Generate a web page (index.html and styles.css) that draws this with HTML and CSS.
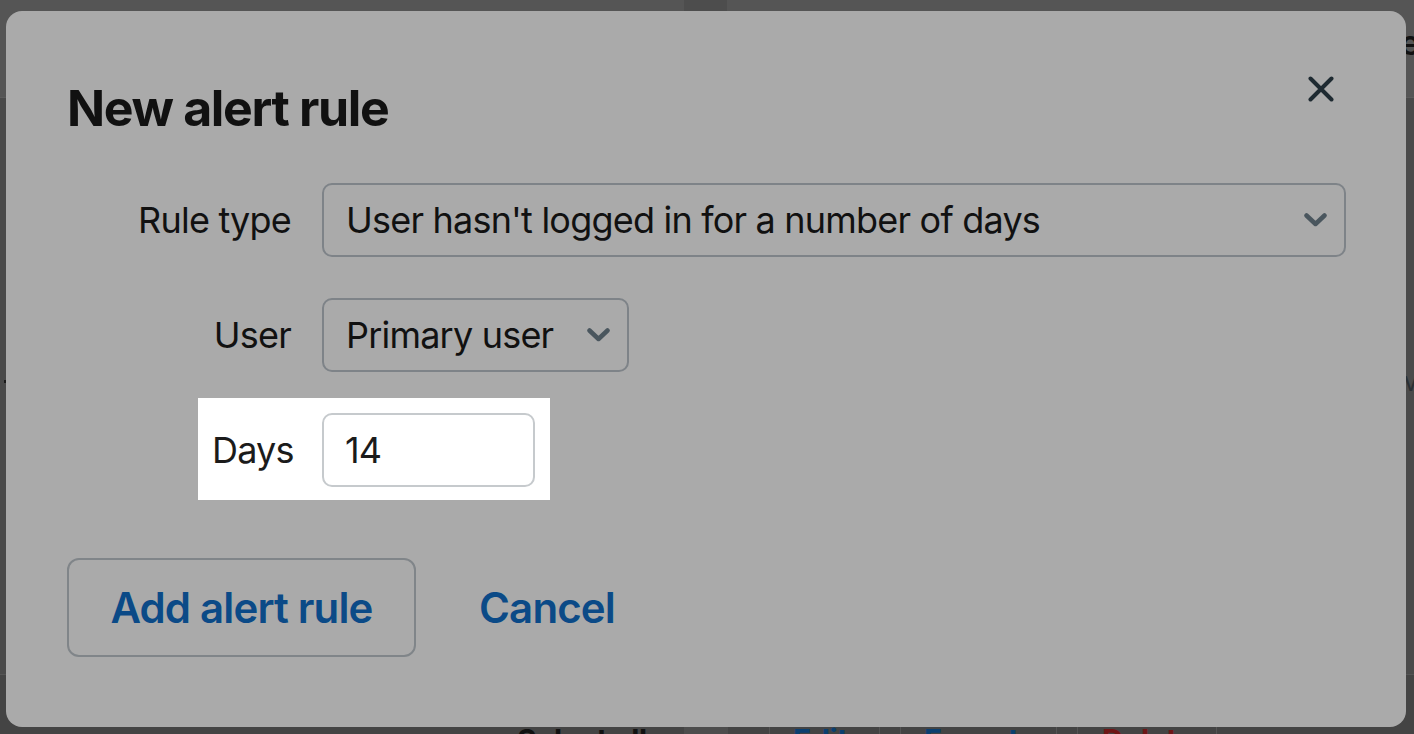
FILE: index.html
```html
<!DOCTYPE html>
<html lang="en">
<head>
<meta charset="utf-8">
<title>New alert rule</title>
<link rel="stylesheet" href="styles.css">
</head>
<body>
<div class="app">
  <header class="app-header">
    <span class="hdr-tab"></span>
    <span class="hdr-title">Save</span>
  </header>
  <main class="app-main">
    <div class="app-row"><span class="app-dot"></span><span class="app-peek">v</span></div>
  </main>
  <footer class="app-foot">
    <span class="tb-text tb-select">Select all</span>
    <span class="tb-box"></span>
    <span class="tb-btn tb-edit"><span class="tb-text tb-link">Edit</span></span>
    <span class="tb-btn tb-export"><span class="tb-text tb-link">Export</span></span>
    <span class="tb-btn tb-delete"><span class="tb-text tb-danger">Delete</span></span>
  </footer>
</div>

<div class="modal" role="dialog" aria-labelledby="modal-title">
  <div class="modal-head">
    <h1 id="modal-title" class="modal-title">New alert rule</h1>
    <button class="close" type="button" aria-label="Close">
      <svg width="26" height="26" viewBox="0 0 26 26" aria-hidden="true">
        <path d="M2.5 2.5 L23.5 23.5 M23.5 2.5 L2.5 23.5" fill="none" stroke="currentColor" stroke-width="4" stroke-linecap="round"/>
      </svg>
    </button>
  </div>

  <form class="form">
    <label class="label">Rule type</label>
    <div class="select select-wide">
      <span>User hasn't logged in for a number of days</span>
      <svg class="chev" width="23" height="14" viewBox="0 0 23 14" aria-hidden="true">
        <path d="M2.5 2.5 L11.5 11 L20.5 2.5" fill="none" stroke="currentColor" stroke-width="4.5" stroke-linecap="round" stroke-linejoin="round"/>
      </svg>
    </div>

    <label class="label">User</label>
    <div class="select select-narrow">
      <span>Primary user</span>
      <svg class="chev" width="23" height="14" viewBox="0 0 23 14" aria-hidden="true">
        <path d="M2.5 2.5 L11.5 11 L20.5 2.5" fill="none" stroke="currentColor" stroke-width="4.5" stroke-linecap="round" stroke-linejoin="round"/>
      </svg>
    </div>

    <div class="spot">
      <label class="label label-lit" for="days">Days</label>
      <input id="days" class="input" type="text" value="14">
    </div>
  </form>

  <div class="actions">
    <button class="btn" type="button">Add alert rule</button>
    <a class="link" href="#">Cancel</a>
  </div>
</div>
</body>
</html>
```

FILE: styles.css
```css
* { box-sizing: border-box; }

html, body {
  margin: 0;
  height: 734px;
  overflow: hidden;
}

body {
  background: #4a4a4a;
  font-family: Inter, "Liberation Sans", sans-serif;
  color: #111;
}

/* ---------- dimmed background app ---------- */
.app {
  display: flex;
  flex-direction: column;
  height: 734px;
}

.app-header {
  height: 98px;
  flex: none;
  background: #555;
  border-bottom: 1px solid #5c5c5c;
  display: flex;
  align-items: flex-start;
}

.hdr-tab {
  width: 43px;
  height: 11px;
  margin-left: 684px;
  background: #4d4d4d;
}

.hdr-title {
  margin-left: auto;
  margin-right: -6px;
  margin-top: 22px;
  font-size: 34px;
  font-weight: 600;
  color: #111;
}

.app-main {
  height: 577px;
  flex: none;
  border-bottom: 1px solid #555;
  display: flex;
  flex-direction: column;
}

.app-row {
  margin-top: 268px;
  display: flex;
  justify-content: space-between;
  align-items: center;
  height: 30px;
}

.app-dot {
  width: 3px;
  height: 3px;
  margin-left: 4px;
  background: #1a1a1a;
}

.app-peek {
  margin-right: -4px;
  font-size: 26px;
  color: #2a2f33;
}

.app-foot {
  flex: 1;
  display: flex;
  align-items: stretch;
  background: #444;
  padding-top: 50px;
}

.tb-text {
  display: block;
  font-size: 30px;
  font-weight: 700;
  line-height: 1;
  letter-spacing: -0.01em;
}

.tb-select {
  margin-left: 517px;
  width: 167px;
  color: #111;
}

.tb-box {
  width: 44px;
  background: #4d4d4d;
}

.tb-btn {
  border-left: 1px solid #555;
  border-right: 1px solid #555;
  padding-left: 23px;
}

.tb-edit { margin-left: 41px; width: 111px; }
.tb-export { margin-left: 20px; width: 157px; }
.tb-delete { margin-left: 20px; width: 140px; padding-left: 24px; }

.tb-link { color: #0b3f70; }
.tb-danger { color: #6e1616; }

/* ---------- modal ---------- */
.modal {
  position: fixed;
  left: 6px;
  top: 11px;
  width: 1400px;
  height: 716px;
  background: #aaaaaa;
  border-radius: 16px;
  padding: 54px 60px 0 61px;
}

.modal-head {
  display: flex;
  justify-content: space-between;
  align-items: flex-start;
}

.modal-title {
  margin: 13px 0 0;
  font-size: 50px;
  line-height: 60px;
  font-weight: 700;
  letter-spacing: -0.027em;
  color: #111;
}

.close {
  width: 48px;
  height: 48px;
  padding: 0;
  margin-right: 1px;
  border: 0;
  background: transparent;
  color: #1e2a31;
  display: flex;
  align-items: center;
  justify-content: center;
}

.form {
  margin-top: 45px;
  display: grid;
  grid-template-columns: 224px 1fr;
  column-gap: 31px;
  row-gap: 41px;
  align-items: center;
}

.label {
  text-align: right;
  font-size: 36px;
  letter-spacing: -0.022em;
  color: #111;
}

.select {
  height: 74px;
  border: 2px solid #7e8388;
  border-radius: 10px;
  padding: 0 17px 0 22px;
  display: flex;
  align-items: center;
  font-size: 36px;
  letter-spacing: -0.022em;
  color: #111;
}

.select-narrow {
  width: 307px;
  justify-self: start;
}

.chev {
  margin-left: auto;
  color: #4a565e;
  flex: none;
}

.spot {
  grid-column: 1 / -1;
  justify-self: start;
  margin: -15px 0 -13px 131px;
  padding: 15px 15px 13px 14px;
  background: #fff;
  display: grid;
  grid-template-columns: 79px 213px;
  column-gap: 31px;
  align-items: center;
}

.label-lit { color: #1b1b1b; }

.input {
  width: 213px;
  height: 74px;
  border: 2px solid #c6cacd;
  border-radius: 10px;
  padding: 0 21px;
  font-family: inherit;
  font-size: 36px;
  letter-spacing: -0.022em;
  color: #1b1b1b;
  background: #fff;
}

.actions {
  margin-top: 71px;
  display: flex;
  align-items: center;
  gap: 63px;
}

.btn {
  width: 349px;
  height: 99px;
  border: 2px solid #808589;
  border-radius: 12px;
  background: transparent;
  font-family: inherit;
  font-size: 42px;
  font-weight: 600;
  letter-spacing: -0.02em;
  color: #0b4a87;
  padding: 0;
}

.link {
  font-size: 42px;
  font-weight: 600;
  letter-spacing: -0.02em;
  color: #0b4a87;
  text-decoration: none;
}
```
